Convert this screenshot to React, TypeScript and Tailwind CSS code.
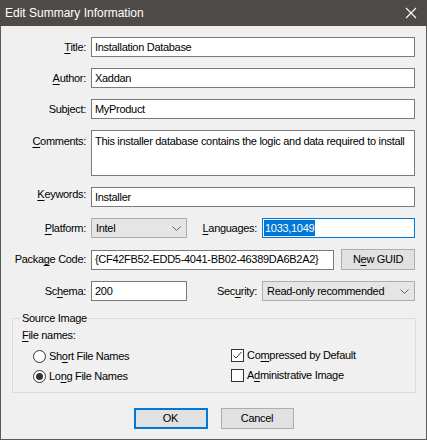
import React from "react";

const font = { fontFamily: '"Liberation Sans", Arial, sans-serif' };

function U({ children }: { children: React.ReactNode }) {
  return <span className="underline underline-offset-[2px] decoration-[1px]">{children}</span>;
}

function Label({ children, className = "" }: { children: React.ReactNode; className?: string }) {
  return <div className={`w-[85px] shrink-0 text-right text-[#000] ${className}`}>{children}</div>;
}

function TextBox({ value, className = "" }: { value: string; className?: string }) {
  return (
    <div className={`h-[20px] bg-white border border-[#7a7a7a] px-[3px] flex items-center whitespace-nowrap overflow-hidden ${className}`}>
      {value}
    </div>
  );
}

function Chevron() {
  return (
    <svg width="9" height="5" viewBox="0 0 9 5" className="shrink-0">
      <path d="M0.5 0.5 L4.5 4.5 L8.5 0.5" fill="none" stroke="#606060" strokeWidth="1" />
    </svg>
  );
}

function Select({ value, className = "" }: { value: string; className?: string }) {
  return (
    <div className={`h-[20px] bg-[#e5e5e5] border border-[#adadad] pl-[4px] pr-[5px] flex items-center justify-between ${className}`}>
      <span>{value}</span>
      <Chevron />
    </div>
  );
}

function Radio({ checked }: { checked?: boolean }) {
  return (
    <div className="w-[13px] h-[13px] rounded-full border border-[#333] bg-white flex items-center justify-center shrink-0">
      {checked && <div className="w-[7px] h-[7px] rounded-full bg-[#333]" />}
    </div>
  );
}

function Check({ checked }: { checked?: boolean }) {
  return (
    <div className="w-[13px] h-[13px] border border-[#333] bg-white flex items-center justify-center shrink-0">
      {checked && (
        <svg width="11" height="11" viewBox="0 0 11 11">
          <path d="M1.5 5.5 L4 8 L9.5 2" fill="none" stroke="#333" strokeWidth="1" />
        </svg>
      )}
    </div>
  );
}

export default function App() {
  return (
    <div className="w-[427px] h-[440px] flex flex-col text-[11px] text-black" style={font}>
      <div className="h-[26px] bg-[#4d4a47] flex items-center justify-between pl-[5px] pr-[10px] shrink-0">
        <span className="text-white text-[12px]">Edit Summary Information</span>
        <svg width="12" height="12" viewBox="0 0 12 12">
          <path d="M1 1 L11 11 M11 1 L1 11" stroke="#ffffff" strokeWidth="1.1" />
        </svg>
      </div>
      <div className="flex-1 bg-[#f0f0f0] border-x border-b border-[#5a5a5a] flex flex-col pt-[11px] tracking-[-0.3px]">
        <div className="flex items-center">
          <Label><U>T</U>itle:</Label>
          <TextBox value="Installation Database" className="ml-[5px] w-[324px]" />
        </div>
        <div className="flex items-center mt-[11px]">
          <Label><U>A</U>uthor:</Label>
          <TextBox value="Xaddan" className="ml-[5px] w-[324px]" />
        </div>
        <div className="flex items-center mt-[11px]">
          <Label>Sub<U>j</U>ect:</Label>
          <TextBox value="MyProduct" className="ml-[5px] w-[324px]" />
        </div>
        <div className="flex items-start mt-[11px]">
          <Label className="pt-[3px]"><U>C</U>omments:</Label>
          <div className="ml-[5px] w-[324px] h-[46px] bg-white border border-[#7a7a7a] px-[3px] pt-[2px] whitespace-nowrap overflow-hidden">
            This installer database contains the logic and data required to install
          </div>
        </div>
        <div className="flex items-start mt-[11px]">
          <Label className="-mt-[1px]"><U>K</U>eywords:</Label>
          <TextBox value="Installer" className="ml-[5px] w-[324px]" />
        </div>
        <div className="flex items-center mt-[11px]">
          <Label><U>P</U>latform:</Label>
          <Select value="Intel" className="ml-[5px] w-[96px]" />
          <div className="w-[70px] text-right shrink-0"><U>L</U>anguages:</div>
          <div className="ml-[5px] w-[153px] h-[20px] bg-white border border-[#0078d7] px-[1px] flex items-center">
            <span className="bg-[#0078d7] text-white px-[1px] leading-[16px]">1033,1049</span>
          </div>
        </div>
        <div className="flex items-center mt-[11px]">
          <Label>Packa<U>g</U>e Code:</Label>
          <TextBox value="{CF42FB52-EDD5-4041-BB02-46389DA6B2A2}" className="ml-[5px] w-[243px]" />
          <div className="ml-[7px] w-[74px] h-[21px] bg-[#e1e1e1] border border-[#adadad] flex items-center justify-center">
            N<U>e</U>w GUID
          </div>
        </div>
        <div className="flex items-center mt-[11px]">
          <Label>Sc<U>h</U>ema:</Label>
          <TextBox value="200" className="ml-[5px] w-[96px]" />
          <div className="w-[70px] text-right shrink-0">Sec<U>u</U>rity:</div>
          <Select value="Read-only recommended" className="ml-[5px] w-[153px]" />
        </div>
        <fieldset className="mt-[10px] ml-[11px] w-[404px] h-[82px] border border-[#dcdcdc] px-[9px] pb-[6px]">
          <legend className="ml-[-1px] px-[1px] leading-[14px]">Source Image</legend>
          <div className="leading-[14px] mt-[3px]"><U>F</U>ile names:</div>
          <div className="grid grid-cols-[198px_1fr] mt-[8px] ml-[11px] gap-y-[7px]">
            <div className="flex items-center gap-[3px] h-[13px]">
              <Radio />
              <span>Sh<U>o</U>rt File Names</span>
            </div>
            <div className="flex items-center gap-[3px] h-[13px] -mt-[1px]">
              <Check checked />
              <span>Co<U>m</U>pressed by Default</span>
            </div>
            <div className="flex items-center gap-[3px] h-[13px]">
              <Radio checked />
              <span>Lo<U>n</U>g File Names</span>
            </div>
            <div className="flex items-center gap-[3px] h-[13px] -mt-[1px]">
              <Check />
              <span>A<U>d</U>ministrative Image</span>
            </div>
          </div>
        </fieldset>
        <div className="flex justify-center gap-[13px] mt-[15px]">
          <div className="w-[74px] h-[21px] bg-[#e1e1e1] border-2 border-[#0078d7] flex items-center justify-center">OK</div>
          <div className="w-[73px] h-[21px] bg-[#e1e1e1] border border-[#adadad] flex items-center justify-center">Cancel</div>
        </div>
      </div>
    </div>
  );
}
